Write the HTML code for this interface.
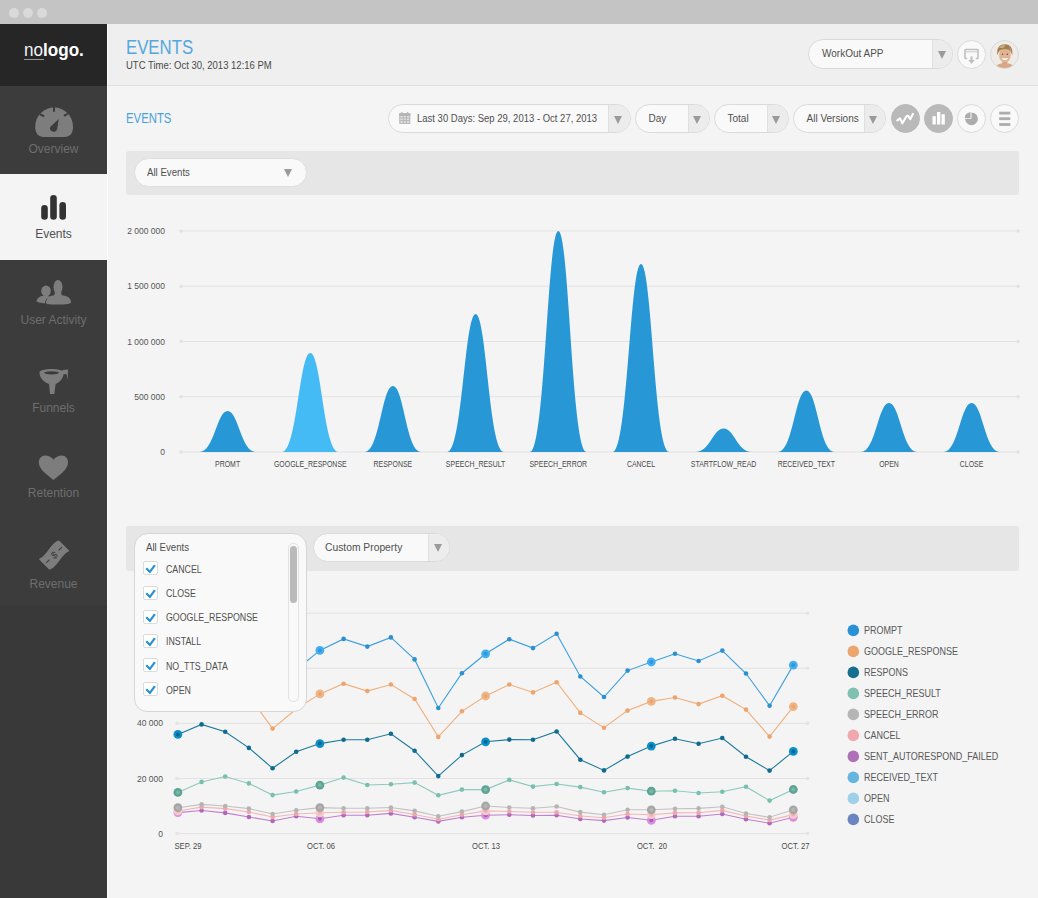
<!DOCTYPE html>
<html><head><meta charset="utf-8">
<style>
*{margin:0;padding:0;box-sizing:border-box}
html,body{width:1038px;height:898px;overflow:hidden;background:#f4f4f4;font-family:"Liberation Sans",sans-serif;color:#555}
.a{position:absolute}
#titlebar{left:0;top:0;width:1038px;height:24px;background:#c4c4c4}
.dot{width:10px;height:10px;border-radius:50%;background:#d9d9d9;top:8px}
#sidebar{left:0;top:24px;width:107px;height:874px;background:#393939}
.navbg{left:0;width:107px;background:#3c3c3c}
#logo{left:0;top:24px;width:107px;height:62px;background:#262626}
.lbl{position:absolute;left:0;width:107px;text-align:center;font-size:12px;color:#6e6e6e;white-space:nowrap}
#header{left:107px;top:24px;width:931px;height:62px;background:#efefef;border-bottom:1px solid #dfdfdf}
.pill{position:absolute;border:1px solid #dadada;border-radius:15px;background:#f9f9f9;font-size:10px;color:#505050;white-space:nowrap}
.pill .arr{position:absolute;right:0;top:0;bottom:0;border-left:1px solid #e0e0e0;background:#ececec;border-radius:0 14px 14px 0}
.pill .t{position:absolute;top:0;line-height:27px;transform-origin:0 50%}
.tri{position:absolute;width:0;height:0;border-left:4px solid transparent;border-right:4px solid transparent;border-top:8px solid #9a9a9a}
.circ{position:absolute;width:29px;height:29px;border-radius:50%;border:1px solid #dadada;background:#f9f9f9}
.filt{position:absolute;left:126px;width:892.5px;background:#e6e6e6;border-radius:3px}
svg text{font-family:"Liberation Sans",sans-serif}
.ax{font-size:8.5px;fill:#555}
.xl{font-size:8.5px;fill:#4a4a4a}
.xl2{font-size:8.5px;fill:#4a4a4a}
.lg{font-size:10px;fill:#585858}
.chk{position:absolute;left:143px;width:15px;height:14px;border:1px solid #dcdcdc;border-radius:2px;background:#fff}
.ck{position:absolute;left:165.5px;font-size:10px;color:#505050;white-space:nowrap;transform-origin:0 0;transform:scaleX(0.88)}
</style></head><body>
<div id="titlebar" class="a">
  <div class="a dot" style="left:9px"></div>
  <div class="a dot" style="left:23px"></div>
  <div class="a dot" style="left:37px"></div>
</div>
<div id="sidebar" class="a"></div>
<div class="a navbg" style="top:86px;height:88px"></div>
<div class="a" style="left:0;top:174px;width:107px;height:86px;background:#f4f4f4"></div>
<div class="a navbg" style="top:260px;height:346px"></div>
<div id="logo" class="a">
  <div class="a" style="left:24px;top:15px;font-size:19px;color:#fff;white-space:nowrap;transform-origin:0 0;transform:scaleX(0.9)"><span style="font-weight:normal;color:#f4f4f4">no</span><b>logo.</b></div>
  <div class="a" style="left:24px;top:35px;width:20px;height:1px;background:#9a9a9a"></div>
</div>
<!-- sidebar icons -->
<svg class="a" style="left:0;top:86px" width="107" height="519">
  <!-- overview gauge -->
  <path d="M43.5,51 C38.5,51 35.2,47.5 35.2,41 C35.2,29.5 44,21.5 54.1,21.5 C64.2,21.5 73,29.5 73,41 C73,47.5 69.7,51 64.7,51 Z" fill="#7d7d7d"/>
  <line x1="54" y1="21" x2="54" y2="25.8" stroke="#3b3b3b" stroke-width="2"/>
  <line x1="39.9" y1="28.1" x2="44.2" y2="30.4" stroke="#3b3b3b" stroke-width="2"/>
  <line x1="67.8" y1="27.6" x2="64" y2="29.8" stroke="#3b3b3b" stroke-width="2"/>
  <path d="M58.8,33 L57.1,43.2 A3.6,3.6 0 1 1 50.2,41 Z" fill="#3b3b3b"/>
  <!-- user activity -->
  <ellipse cx="46" cy="205" rx="4.8" ry="5.5" fill="#7d7d7d"/>
  <path d="M36.5,215.5 C37,211 41,209.8 46,209.8 C47.5,209.8 49,210.3 50,211 C46.5,212 45,214 45,217.5 C42,217 38,216.5 36.5,215.5 Z" fill="#7d7d7d"/>
  <ellipse cx="58" cy="201" rx="4.5" ry="7" fill="#7d7d7d"/>
  <path d="M55,206 L61,206 L62,210 L54,210 Z" fill="#7d7d7d"/>
  <path d="M46,217 C46,211.5 50,209 58,209 C66,209 71,211.5 71,216 C71,218 66,218.5 58,218.5 C50,218.5 46,218.5 46,217 Z" fill="#7d7d7d"/>
  <!-- funnel -->
  <ellipse cx="51.6" cy="286.3" rx="12.1" ry="3.3" fill="#7d7d7d"/>
  <path d="M39.5,286.5 C39.5,292 44,296.3 49,298 L50,308 L54.3,308 L55.6,298 C60,296.3 63.7,292 63.7,286.5 Z" fill="#7d7d7d"/>
  <path d="M62.5,284 L68,283.6 L67.6,294 L66.6,288.2 L63.2,288 Z" fill="#7d7d7d"/>
  <ellipse cx="51.6" cy="286.8" rx="7.4" ry="1.6" fill="#3b3b3b"/>
  <!-- heart -->
  <path d="M53.5,394 C48,389.5 38.8,383.5 38.8,376.5 C38.8,372.5 41.5,369.6 45,369.6 C48.5,369.6 52,371.5 53.5,373.7 C55,371.5 58.5,369.6 62,369.6 C65.5,369.6 68,372.5 68,376.5 C68,383.5 59,389.5 53.5,394 Z" fill="#7d7d7d"/>
  <!-- revenue -->
  <g transform="translate(54.1,469) rotate(45)">
    <path d="M-6.5,-13 L7,-13 C3.5,-6 10.5,6 6.5,13 L-7,13 C-3.5,6 -10.5,-6 -6.5,-13 Z" fill="#7d7d7d" stroke="#7d7d7d" stroke-width="1.6" stroke-linejoin="round"/>
    <line x1="0" y1="-11" x2="0" y2="-6.5" stroke="#3b3b3b" stroke-width="1"/>
    <line x1="0" y1="6.5" x2="0" y2="11" stroke="#3b3b3b" stroke-width="1"/>
    <text x="0" y="3.6" text-anchor="middle" font-size="10" fill="#3b3b3b" transform="rotate(-75)">$</text>
  </g>
  <!-- events bars -->
  <rect x="41.2" y="119" width="6.6" height="14.8" rx="3.3" fill="#333"/>
  <rect x="50.2" y="109" width="6.6" height="24.8" rx="3.3" fill="#333"/>
  <rect x="59.4" y="116" width="6.6" height="17.8" rx="3.3" fill="#333"/>
</svg>
<div class="lbl" style="top:141.5px">Overview</div>
<div class="lbl" style="top:226.5px;color:#505050">Events</div>
<div class="lbl" style="top:313px">User Activity</div>
<div class="lbl" style="top:400.5px">Funnels</div>
<div class="lbl" style="top:486px">Retention</div>
<div class="lbl" style="top:577px">Revenue</div>

<div id="header" class="a"></div>
<div class="a" style="left:107px;top:24px;width:1px;height:874px;background:#fbfbfb"></div>
<div class="a" style="left:125.5px;top:36px;font-size:19.5px;color:#52a8df;white-space:nowrap;transform-origin:0 0;transform:scaleX(0.86)">EVENTS</div>
<div class="a" style="left:126px;top:59.5px;font-size:10px;color:#4a4a4a;white-space:nowrap;transform-origin:0 0;transform:scaleX(0.95)">UTC Time: Oct 30, 2013 12:16 PM</div>

<div class="pill" style="left:808px;top:39px;width:145px;height:30px"><span class="t" style="left:13px">WorkOut APP</span><div class="arr" style="width:20px"><div class="tri" style="left:4.5px;top:10.5px"></div></div></div>
<div class="circ" style="left:957px;top:40px">
  <svg class="a" style="left:0;top:0" width="29" height="29"><g transform="translate(-958,-40.8)">
    <path d="M967.2,58.3 L965.6,58.3 Q965,58.3 965,57.7 L965,49.9 Q965,49.3 965.6,49.3 L977.4,49.3 Q978,49.3 978,49.9 L978,57.7 Q978,58.3 977.4,58.3 L975.8,58.3" fill="none" stroke="#c0c0c0" stroke-width="1.6"/>
    <line x1="965" y1="51.6" x2="978" y2="51.6" stroke="#c8c8c8" stroke-width="0.9"/>
    <path d="M970.4,56.3 L972.6,56.3 L972.6,59.8 L974.8,59.8 L971.5,63.8 L968.2,59.8 L970.4,59.8 Z" fill="#c0c0c0"/>
  </g></svg>
</div>
<div class="circ" style="left:990px;top:40px;background:#efebe7;overflow:hidden">
  <svg class="a" style="left:-1px;top:-1px" width="29" height="29">
    <path d="M5,29 C6,25 9,23.3 14.8,23.3 C20.6,23.3 23.6,25 24.6,29 Z" fill="#d9a785"/>
    <rect x="12.3" y="19" width="5" height="5" fill="#d6a280"/>
    <ellipse cx="14.9" cy="15" rx="5.9" ry="7.4" fill="#e0b393"/>
    <path d="M7.4,15.5 C6.3,8.2 9,4.2 14.8,4.2 C20.6,4.2 23.3,8.2 22.2,15.5 C21.2,11.3 19.6,9.3 14.8,9 C10,9.3 8.4,11.3 7.4,15.5 Z" fill="#a27f50"/>
    <path d="M9,8 C10.5,5.5 13,4.6 15.5,4.8 L13.5,8 Z" fill="#c9ab78"/>
    <path d="M19,6.5 C20.5,8 21.5,10 21.8,12.5 L20,10 Z" fill="#c2a270"/>
    <path d="M11.6,18.3 C12.8,20.8 17,20.8 18.2,18.3 Z" fill="#fafafa"/>
    <circle cx="12.5" cy="14.2" r="0.75" fill="#6a4a3a"/><circle cx="17.3" cy="14.2" r="0.75" fill="#6a4a3a"/>
  </svg>
</div>

<!-- toolbar -->
<div class="a" style="left:125.5px;top:110px;font-size:14px;color:#4aa2dc;white-space:nowrap;transform-origin:0 0;transform:scaleX(0.81)">EVENTS</div>
<div class="pill" style="left:388px;top:104px;width:243px;height:29px">
  <svg class="a" style="left:10px;top:7px" width="13" height="13">
    <rect x="0.8" y="1.8" width="10" height="9.6" fill="#dedede" stroke="#b4b4b4" stroke-width="1"/>
    <rect x="0.3" y="1.3" width="11" height="2.6" fill="#b4b4b4"/>
    <g stroke="#b4b4b4" stroke-width="0.9"><line x1="0.8" y1="6" x2="10.8" y2="6"/><line x1="0.8" y1="8.6" x2="10.8" y2="8.6"/><line x1="4.3" y1="3.5" x2="4.3" y2="11.4"/><line x1="7.4" y1="3.5" x2="7.4" y2="11.4"/></g>
    <rect x="2.3" y="0" width="1.2" height="2" fill="#b4b4b4"/><rect x="8" y="0" width="1.2" height="2" fill="#b4b4b4"/>
  </svg>
  <span class="t" style="left:28px;transform:scaleX(0.95)">Last 30 Days: Sep 29, 2013 - Oct 27, 2013</span><div class="arr" style="width:22px"><div class="tri" style="left:5px;top:10.7px"></div></div></div>
<div class="pill" style="left:635px;top:104px;width:75px;height:29px"><span class="t" style="left:12.5px">Day</span><div class="arr" style="width:21px"><div class="tri" style="left:4.3px;top:10.7px"></div></div></div>
<div class="pill" style="left:713.5px;top:104px;width:75px;height:29px"><span class="t" style="left:13px">Total</span><div class="arr" style="width:21px"><div class="tri" style="left:4.3px;top:10.7px"></div></div></div>
<div class="pill" style="left:793px;top:104px;width:93px;height:29px"><span class="t" style="left:12.5px">All Versions</span><div class="arr" style="width:21px"><div class="tri" style="left:4.3px;top:10.7px"></div></div></div>

<div class="circ" style="left:890.5px;top:104px;background:#b9b9b9;border-color:#b9b9b9">
  <svg class="a" style="left:-1px;top:-1px" width="29" height="29"><path d="M6.3,16.4 L9,14.4 L11.4,19.2 L15.2,12.8 Q16.5,11.3 17.6,12.2 L19.2,15.2 L21.9,9.9" fill="none" stroke="#fff" stroke-width="2.1" stroke-linejoin="round" stroke-linecap="round"/></svg>
</div>
<div class="circ" style="left:923.5px;top:104px;background:#b9b9b9;border-color:#b9b9b9">
  <svg class="a" style="left:-1px;top:-1px" width="29" height="29"><rect x="8.5" y="12.2" width="3.3" height="8.3" fill="#fff"/><rect x="13" y="8" width="3.3" height="12.5" fill="#fff"/><rect x="17.5" y="10.2" width="3.3" height="10.3" fill="#fff"/></svg>
</div>
<div class="circ" style="left:957px;top:104px">
  <svg class="a" style="left:-1px;top:-1px" width="29" height="29"><path d="M14.5,8.4 A6.4,6.4 0 1 1 8.1,14.8 L14.5,14.8 Z" fill="#acacac"/><path d="M13.5,8.2 L13.5,13.9 L7.8,13.9 A5.7,5.7 0 0 1 13.5,8.2 Z" fill="#acacac"/></svg>
</div>
<div class="circ" style="left:990px;top:104px">
  <svg class="a" style="left:-1px;top:-1px" width="29" height="29"><rect x="9.2" y="7.7" width="11.1" height="2.8" fill="#acacac"/><rect x="9.2" y="13.3" width="11.1" height="2.8" fill="#acacac"/><rect x="9.2" y="19.1" width="11.1" height="2.8" fill="#acacac"/></svg>
</div>

<!-- panel 1 -->
<div class="filt" style="top:151px;height:44px"></div>
<div class="pill" style="left:134px;top:158px;width:172.5px;height:29px;border-color:#dedede"><span class="t" style="left:11.5px;transform:scaleX(0.965)">All Events</span><div class="tri" style="left:149px;top:9.5px"></div></div>

<svg class="a" style="left:0;top:0" width="1038" height="898">
<line x1="181" y1="231" x2="1018" y2="231" stroke="#e2e2e2" stroke-width="1"/>
<circle cx="181" cy="231" r="1.8" fill="#e2e2e2"/><circle cx="1018" cy="231" r="1.8" fill="#e2e2e2"/>
<text x="165" y="234" text-anchor="end" class="ax">2 000 000</text>
<line x1="181" y1="286.25" x2="1018" y2="286.25" stroke="#e2e2e2" stroke-width="1"/>
<circle cx="181" cy="286.25" r="1.8" fill="#e2e2e2"/><circle cx="1018" cy="286.25" r="1.8" fill="#e2e2e2"/>
<text x="165" y="289.25" text-anchor="end" class="ax">1 500 000</text>
<line x1="181" y1="341.5" x2="1018" y2="341.5" stroke="#e2e2e2" stroke-width="1"/>
<circle cx="181" cy="341.5" r="1.8" fill="#e2e2e2"/><circle cx="1018" cy="341.5" r="1.8" fill="#e2e2e2"/>
<text x="165" y="344.5" text-anchor="end" class="ax">1 000 000</text>
<line x1="181" y1="396.75" x2="1018" y2="396.75" stroke="#e2e2e2" stroke-width="1"/>
<circle cx="181" cy="396.75" r="1.8" fill="#e2e2e2"/><circle cx="1018" cy="396.75" r="1.8" fill="#e2e2e2"/>
<text x="165" y="399.75" text-anchor="end" class="ax">500 000</text>
<line x1="181" y1="452" x2="1018" y2="452" stroke="#e2e2e2" stroke-width="1"/>
<circle cx="181" cy="452" r="1.8" fill="#e2e2e2"/><circle cx="1018" cy="452" r="1.8" fill="#e2e2e2"/>
<text x="165" y="455" text-anchor="end" class="ax">0</text>
<path d="M199.3,452 C214.3,452 216.6,411.0 227.6,411.0 C238.6,411.0 240.9,452 255.9,452 Z" fill="#2797d5"/>
<text transform="translate(227.6,467) scale(0.82,1)" text-anchor="middle" class="xl">PROMT</text>
<path d="M282.0,452 C297.0,452 299.3,353.0 310.3,353.0 C321.3,353.0 323.6,452 338.6,452 Z" fill="#45bbf5"/>
<text transform="translate(310.3,467) scale(0.82,1)" text-anchor="middle" class="xl">GOOGLE_RESPONSE</text>
<path d="M364.6,452 C379.6,452 381.9,386.0 392.9,386.0 C403.9,386.0 406.2,452 421.2,452 Z" fill="#2797d5"/>
<text transform="translate(392.9,467) scale(0.82,1)" text-anchor="middle" class="xl">RESPONSE</text>
<path d="M447.3,452 C462.3,452 464.6,314.0 475.6,314.0 C486.6,314.0 488.9,452 503.9,452 Z" fill="#2797d5"/>
<text transform="translate(475.6,467) scale(0.82,1)" text-anchor="middle" class="xl">SPEECH_RESULT</text>
<path d="M530.0,452 C545.0,452 547.3,231.0 558.3,231.0 C569.3,231.0 571.6,452 586.6,452 Z" fill="#2797d5"/>
<text transform="translate(558.3,467) scale(0.82,1)" text-anchor="middle" class="xl">SPEECH_ERROR</text>
<path d="M612.7,452 C627.7,452 630.0,264.0 641.0,264.0 C652.0,264.0 654.2,452 669.2,452 Z" fill="#2797d5"/>
<text transform="translate(641.0,467) scale(0.82,1)" text-anchor="middle" class="xl">CANCEL</text>
<path d="M695.3,452 C710.3,452 712.6,428.5 723.6,428.5 C734.6,428.5 736.9,452 751.9,452 Z" fill="#2797d5"/>
<text transform="translate(723.6,467) scale(0.82,1)" text-anchor="middle" class="xl">STARTFLOW_READ</text>
<path d="M778.0,452 C793.0,452 795.3,390.5 806.3,390.5 C817.3,390.5 819.6,452 834.6,452 Z" fill="#2797d5"/>
<text transform="translate(806.3,467) scale(0.82,1)" text-anchor="middle" class="xl">RECEIVED_TEXT</text>
<path d="M860.7,452 C875.7,452 878.0,403.0 889.0,403.0 C900.0,403.0 902.3,452 917.3,452 Z" fill="#2797d5"/>
<text transform="translate(889.0,467) scale(0.82,1)" text-anchor="middle" class="xl">OPEN</text>
<path d="M943.3,452 C958.3,452 960.6,403.0 971.6,403.0 C982.6,403.0 984.9,452 999.9,452 Z" fill="#2797d5"/>
<text transform="translate(971.6,467) scale(0.82,1)" text-anchor="middle" class="xl">CLOSE</text>
<line x1="177" y1="613.2" x2="807.5" y2="613.2" stroke="#e2e2e2" stroke-width="1"/>
<circle cx="177" cy="613.2" r="1.8" fill="#e4e4e4"/><circle cx="807.5" cy="613.2" r="1.8" fill="#e4e4e4"/>
<line x1="177" y1="668.3" x2="807.5" y2="668.3" stroke="#e2e2e2" stroke-width="1"/>
<circle cx="177" cy="668.3" r="1.8" fill="#e4e4e4"/><circle cx="807.5" cy="668.3" r="1.8" fill="#e4e4e4"/>
<line x1="177" y1="723.4" x2="807.5" y2="723.4" stroke="#e2e2e2" stroke-width="1"/>
<circle cx="177" cy="723.4" r="1.8" fill="#e4e4e4"/><circle cx="807.5" cy="723.4" r="1.8" fill="#e4e4e4"/>
<line x1="177" y1="778.5" x2="807.5" y2="778.5" stroke="#e2e2e2" stroke-width="1"/>
<circle cx="177" cy="778.5" r="1.8" fill="#e4e4e4"/><circle cx="807.5" cy="778.5" r="1.8" fill="#e4e4e4"/>
<line x1="177" y1="833.6" x2="807.5" y2="833.6" stroke="#e2e2e2" stroke-width="1"/>
<circle cx="177" cy="833.6" r="1.8" fill="#e4e4e4"/><circle cx="807.5" cy="833.6" r="1.8" fill="#e4e4e4"/>
<text x="163" y="726.4" text-anchor="end" class="ax">40 000</text>
<text x="163" y="781.5" text-anchor="end" class="ax">20 000</text>
<text x="163" y="836.6" text-anchor="end" class="ax">0</text>
<text transform="translate(188,849) scale(0.9,1)" text-anchor="middle" class="xl2">SEP. 29</text>
<text transform="translate(321,849) scale(0.9,1)" text-anchor="middle" class="xl2">OCT. 06</text>
<text transform="translate(486,849) scale(0.9,1)" text-anchor="middle" class="xl2">OCT. 13</text>
<text transform="translate(652,849) scale(0.9,1)" text-anchor="middle" class="xl2">OCT.&#160;&#160;20</text>
<text transform="translate(795.6,849) scale(0.9,1)" text-anchor="middle" class="xl2">OCT. 27</text>
<path d="M177.9,812.6 L201.6,810.5 L225.2,812.9 L248.9,817.0 L272.6,821.0 L296.2,816.2 L319.9,818.8 L343.6,815.2 L367.3,815.2 L390.9,813.4 L414.6,817.3 L438.3,821.4 L461.9,817.3 L485.6,815.2 L509.3,814.7 L533.0,815.5 L556.6,815.2 L580.3,819.0 L604.0,820.6 L627.6,817.5 L651.3,820.3 L675.0,816.2 L698.6,816.3 L722.3,814.0 L746.0,819.3 L769.6,823.2 L793.3,817.3" fill="none" stroke="#c07fca" stroke-width="1.1"/>
<path d="M177.9,811.0 L201.6,807.1 L225.2,808.6 L248.9,812.0 L272.6,817.0 L296.2,814.0 L319.9,812.8 L343.6,812.2 L367.3,812.0 L390.9,810.4 L414.6,814.5 L438.3,819.3 L461.9,814.7 L485.6,810.9 L509.3,811.5 L533.0,812.2 L556.6,812.2 L580.3,816.0 L604.0,817.8 L627.6,814.0 L651.3,814.7 L675.0,812.9 L698.6,812.7 L722.3,810.4 L746.0,816.0 L769.6,820.1 L793.3,814.6" fill="none" stroke="#f5b5ba" stroke-width="1.1"/>
<path d="M177.9,807.7 L201.6,804.4 L225.2,806.0 L248.9,808.6 L272.6,814.0 L296.2,810.2 L319.9,807.6 L343.6,808.3 L367.3,808.3 L390.9,807.5 L414.6,810.9 L438.3,816.2 L461.9,811.6 L485.6,806.0 L509.3,807.5 L533.0,808.3 L556.6,806.5 L580.3,812.1 L604.0,814.7 L627.6,809.8 L651.3,809.8 L675.0,808.8 L698.6,808.4 L722.3,806.8 L746.0,813.5 L769.6,817.3 L793.3,809.8" fill="none" stroke="#c2c2c2" stroke-width="1.1"/>
<path d="M177.9,792.4 L201.6,781.9 L225.2,776.5 L248.9,783.4 L272.6,795.1 L296.2,791.5 L319.9,785.1 L343.6,777.6 L367.3,785.0 L390.9,784.3 L414.6,782.6 L438.3,795.3 L461.9,789.6 L485.6,789.6 L509.3,779.9 L533.0,786.6 L556.6,784.0 L580.3,787.1 L604.0,792.2 L627.6,788.1 L651.3,791.2 L675.0,790.7 L698.6,793.0 L722.3,791.7 L746.0,786.7 L769.6,800.6 L793.3,789.5" fill="none" stroke="#8ecabd" stroke-width="1.1"/>
<path d="M177.9,734.4 L201.6,724.4 L225.2,731.7 L248.9,747.9 L272.6,768.3 L296.2,751.8 L319.9,743.6 L343.6,739.7 L367.3,739.7 L390.9,733.8 L414.6,750.7 L438.3,776.1 L461.9,755.1 L485.6,741.8 L509.3,739.6 L533.0,739.7 L556.6,731.5 L580.3,759.7 L604.0,770.4 L627.6,756.6 L651.3,746.1 L675.0,738.7 L698.6,743.8 L722.3,738.0 L746.0,756.7 L769.6,770.6 L793.3,751.4" fill="none" stroke="#1a7a9c" stroke-width="1.1"/>
<path d="M248.9,696.0 L272.6,728.6 L296.2,709.0 L319.9,693.9 L343.6,683.7 L367.3,691.1 L390.9,684.5 L414.6,699.0 L438.3,736.9 L461.9,711.3 L485.6,696.0 L509.3,684.5 L533.0,692.4 L556.6,682.2 L580.3,712.9 L604.0,727.7 L627.6,710.6 L651.3,701.4 L675.0,697.5 L698.6,704.1 L722.3,695.7 L746.0,709.6 L769.6,736.6 L793.3,706.6" fill="none" stroke="#f0b07c" stroke-width="1.1"/>
<path d="M296.2,669.7 L319.9,650.4 L343.6,638.9 L367.3,646.6 L390.9,637.4 L414.6,659.4 L438.3,708.0 L461.9,673.2 L485.6,653.8 L509.3,639.2 L533.0,648.1 L556.6,633.8 L580.3,676.5 L604.0,697.0 L627.6,670.6 L651.3,662.0 L675.0,653.8 L698.6,661.0 L722.3,650.6 L746.0,673.5 L769.6,705.7 L793.3,665.1" fill="none" stroke="#3a9fdd" stroke-width="1.1"/>
<circle cx="177.9" cy="812.6" r="4.4" fill="#d98ee1"/><circle cx="177.9" cy="812.6" r="2" fill="#a860b0"/>
<circle cx="201.6" cy="810.5" r="2.3" fill="#b068bd"/>
<circle cx="225.2" cy="812.9" r="2.3" fill="#b068bd"/>
<circle cx="248.9" cy="817.0" r="2.3" fill="#b068bd"/>
<circle cx="272.6" cy="821.0" r="2.3" fill="#b068bd"/>
<circle cx="296.2" cy="816.2" r="2.3" fill="#b068bd"/>
<circle cx="319.9" cy="818.8" r="4.4" fill="#d98ee1"/><circle cx="319.9" cy="818.8" r="2" fill="#a860b0"/>
<circle cx="343.6" cy="815.2" r="2.3" fill="#b068bd"/>
<circle cx="367.3" cy="815.2" r="2.3" fill="#b068bd"/>
<circle cx="390.9" cy="813.4" r="2.3" fill="#b068bd"/>
<circle cx="414.6" cy="817.3" r="2.3" fill="#b068bd"/>
<circle cx="438.3" cy="821.4" r="2.3" fill="#b068bd"/>
<circle cx="461.9" cy="817.3" r="2.3" fill="#b068bd"/>
<circle cx="485.6" cy="815.2" r="4.4" fill="#d98ee1"/><circle cx="485.6" cy="815.2" r="2" fill="#a860b0"/>
<circle cx="509.3" cy="814.7" r="2.3" fill="#b068bd"/>
<circle cx="533.0" cy="815.5" r="2.3" fill="#b068bd"/>
<circle cx="556.6" cy="815.2" r="2.3" fill="#b068bd"/>
<circle cx="580.3" cy="819.0" r="2.3" fill="#b068bd"/>
<circle cx="604.0" cy="820.6" r="2.3" fill="#b068bd"/>
<circle cx="627.6" cy="817.5" r="2.3" fill="#b068bd"/>
<circle cx="651.3" cy="820.3" r="4.4" fill="#d98ee1"/><circle cx="651.3" cy="820.3" r="2" fill="#a860b0"/>
<circle cx="675.0" cy="816.2" r="2.3" fill="#b068bd"/>
<circle cx="698.6" cy="816.3" r="2.3" fill="#b068bd"/>
<circle cx="722.3" cy="814.0" r="2.3" fill="#b068bd"/>
<circle cx="746.0" cy="819.3" r="2.3" fill="#b068bd"/>
<circle cx="769.6" cy="823.2" r="2.3" fill="#b068bd"/>
<circle cx="793.3" cy="817.3" r="4.4" fill="#d98ee1"/><circle cx="793.3" cy="817.3" r="2" fill="#a860b0"/>
<circle cx="177.9" cy="811.0" r="4.4" fill="#f7c9c9"/><circle cx="177.9" cy="811.0" r="2" fill="#f0b2b2"/>
<circle cx="201.6" cy="807.1" r="2.3" fill="#f0a5ab"/>
<circle cx="225.2" cy="808.6" r="2.3" fill="#f0a5ab"/>
<circle cx="248.9" cy="812.0" r="2.3" fill="#f0a5ab"/>
<circle cx="272.6" cy="817.0" r="2.3" fill="#f0a5ab"/>
<circle cx="296.2" cy="814.0" r="2.3" fill="#f0a5ab"/>
<circle cx="319.9" cy="812.8" r="4.4" fill="#f7c9c9"/><circle cx="319.9" cy="812.8" r="2" fill="#f0b2b2"/>
<circle cx="343.6" cy="812.2" r="2.3" fill="#f0a5ab"/>
<circle cx="367.3" cy="812.0" r="2.3" fill="#f0a5ab"/>
<circle cx="390.9" cy="810.4" r="2.3" fill="#f0a5ab"/>
<circle cx="414.6" cy="814.5" r="2.3" fill="#f0a5ab"/>
<circle cx="438.3" cy="819.3" r="2.3" fill="#f0a5ab"/>
<circle cx="461.9" cy="814.7" r="2.3" fill="#f0a5ab"/>
<circle cx="485.6" cy="810.9" r="4.4" fill="#f7c9c9"/><circle cx="485.6" cy="810.9" r="2" fill="#f0b2b2"/>
<circle cx="509.3" cy="811.5" r="2.3" fill="#f0a5ab"/>
<circle cx="533.0" cy="812.2" r="2.3" fill="#f0a5ab"/>
<circle cx="556.6" cy="812.2" r="2.3" fill="#f0a5ab"/>
<circle cx="580.3" cy="816.0" r="2.3" fill="#f0a5ab"/>
<circle cx="604.0" cy="817.8" r="2.3" fill="#f0a5ab"/>
<circle cx="627.6" cy="814.0" r="2.3" fill="#f0a5ab"/>
<circle cx="651.3" cy="814.7" r="4.4" fill="#f7c9c9"/><circle cx="651.3" cy="814.7" r="2" fill="#f0b2b2"/>
<circle cx="675.0" cy="812.9" r="2.3" fill="#f0a5ab"/>
<circle cx="698.6" cy="812.7" r="2.3" fill="#f0a5ab"/>
<circle cx="722.3" cy="810.4" r="2.3" fill="#f0a5ab"/>
<circle cx="746.0" cy="816.0" r="2.3" fill="#f0a5ab"/>
<circle cx="769.6" cy="820.1" r="2.3" fill="#f0a5ab"/>
<circle cx="793.3" cy="814.6" r="4.4" fill="#f7c9c9"/><circle cx="793.3" cy="814.6" r="2" fill="#f0b2b2"/>
<circle cx="177.9" cy="807.7" r="4.4" fill="#a6a6a6"/><circle cx="177.9" cy="807.7" r="2" fill="#b6b6b6"/>
<circle cx="201.6" cy="804.4" r="2.3" fill="#b4b4b4"/>
<circle cx="225.2" cy="806.0" r="2.3" fill="#b4b4b4"/>
<circle cx="248.9" cy="808.6" r="2.3" fill="#b4b4b4"/>
<circle cx="272.6" cy="814.0" r="2.3" fill="#b4b4b4"/>
<circle cx="296.2" cy="810.2" r="2.3" fill="#b4b4b4"/>
<circle cx="319.9" cy="807.6" r="4.4" fill="#a6a6a6"/><circle cx="319.9" cy="807.6" r="2" fill="#b6b6b6"/>
<circle cx="343.6" cy="808.3" r="2.3" fill="#b4b4b4"/>
<circle cx="367.3" cy="808.3" r="2.3" fill="#b4b4b4"/>
<circle cx="390.9" cy="807.5" r="2.3" fill="#b4b4b4"/>
<circle cx="414.6" cy="810.9" r="2.3" fill="#b4b4b4"/>
<circle cx="438.3" cy="816.2" r="2.3" fill="#b4b4b4"/>
<circle cx="461.9" cy="811.6" r="2.3" fill="#b4b4b4"/>
<circle cx="485.6" cy="806.0" r="4.4" fill="#a6a6a6"/><circle cx="485.6" cy="806.0" r="2" fill="#b6b6b6"/>
<circle cx="509.3" cy="807.5" r="2.3" fill="#b4b4b4"/>
<circle cx="533.0" cy="808.3" r="2.3" fill="#b4b4b4"/>
<circle cx="556.6" cy="806.5" r="2.3" fill="#b4b4b4"/>
<circle cx="580.3" cy="812.1" r="2.3" fill="#b4b4b4"/>
<circle cx="604.0" cy="814.7" r="2.3" fill="#b4b4b4"/>
<circle cx="627.6" cy="809.8" r="2.3" fill="#b4b4b4"/>
<circle cx="651.3" cy="809.8" r="4.4" fill="#a6a6a6"/><circle cx="651.3" cy="809.8" r="2" fill="#b6b6b6"/>
<circle cx="675.0" cy="808.8" r="2.3" fill="#b4b4b4"/>
<circle cx="698.6" cy="808.4" r="2.3" fill="#b4b4b4"/>
<circle cx="722.3" cy="806.8" r="2.3" fill="#b4b4b4"/>
<circle cx="746.0" cy="813.5" r="2.3" fill="#b4b4b4"/>
<circle cx="769.6" cy="817.3" r="2.3" fill="#b4b4b4"/>
<circle cx="793.3" cy="809.8" r="4.4" fill="#a6a6a6"/><circle cx="793.3" cy="809.8" r="2" fill="#b6b6b6"/>
<circle cx="177.9" cy="792.4" r="4.4" fill="#5ea393"/><circle cx="177.9" cy="792.4" r="2" fill="#7ab8a8"/>
<circle cx="201.6" cy="781.9" r="2.3" fill="#79bfae"/>
<circle cx="225.2" cy="776.5" r="2.3" fill="#79bfae"/>
<circle cx="248.9" cy="783.4" r="2.3" fill="#79bfae"/>
<circle cx="272.6" cy="795.1" r="2.3" fill="#79bfae"/>
<circle cx="296.2" cy="791.5" r="2.3" fill="#79bfae"/>
<circle cx="319.9" cy="785.1" r="4.4" fill="#5ea393"/><circle cx="319.9" cy="785.1" r="2" fill="#7ab8a8"/>
<circle cx="343.6" cy="777.6" r="2.3" fill="#79bfae"/>
<circle cx="367.3" cy="785.0" r="2.3" fill="#79bfae"/>
<circle cx="390.9" cy="784.3" r="2.3" fill="#79bfae"/>
<circle cx="414.6" cy="782.6" r="2.3" fill="#79bfae"/>
<circle cx="438.3" cy="795.3" r="2.3" fill="#79bfae"/>
<circle cx="461.9" cy="789.6" r="2.3" fill="#79bfae"/>
<circle cx="485.6" cy="789.6" r="4.4" fill="#5ea393"/><circle cx="485.6" cy="789.6" r="2" fill="#7ab8a8"/>
<circle cx="509.3" cy="779.9" r="2.3" fill="#79bfae"/>
<circle cx="533.0" cy="786.6" r="2.3" fill="#79bfae"/>
<circle cx="556.6" cy="784.0" r="2.3" fill="#79bfae"/>
<circle cx="580.3" cy="787.1" r="2.3" fill="#79bfae"/>
<circle cx="604.0" cy="792.2" r="2.3" fill="#79bfae"/>
<circle cx="627.6" cy="788.1" r="2.3" fill="#79bfae"/>
<circle cx="651.3" cy="791.2" r="4.4" fill="#5ea393"/><circle cx="651.3" cy="791.2" r="2" fill="#7ab8a8"/>
<circle cx="675.0" cy="790.7" r="2.3" fill="#79bfae"/>
<circle cx="698.6" cy="793.0" r="2.3" fill="#79bfae"/>
<circle cx="722.3" cy="791.7" r="2.3" fill="#79bfae"/>
<circle cx="746.0" cy="786.7" r="2.3" fill="#79bfae"/>
<circle cx="769.6" cy="800.6" r="2.3" fill="#79bfae"/>
<circle cx="793.3" cy="789.5" r="4.4" fill="#5ea393"/><circle cx="793.3" cy="789.5" r="2" fill="#7ab8a8"/>
<circle cx="177.9" cy="734.4" r="4.4" fill="#0b90cc"/><circle cx="177.9" cy="734.4" r="2" fill="#0a6890"/>
<circle cx="201.6" cy="724.4" r="2.3" fill="#106b8e"/>
<circle cx="225.2" cy="731.7" r="2.3" fill="#106b8e"/>
<circle cx="248.9" cy="747.9" r="2.3" fill="#106b8e"/>
<circle cx="272.6" cy="768.3" r="2.3" fill="#106b8e"/>
<circle cx="296.2" cy="751.8" r="2.3" fill="#106b8e"/>
<circle cx="319.9" cy="743.6" r="4.4" fill="#0b90cc"/><circle cx="319.9" cy="743.6" r="2" fill="#0a6890"/>
<circle cx="343.6" cy="739.7" r="2.3" fill="#106b8e"/>
<circle cx="367.3" cy="739.7" r="2.3" fill="#106b8e"/>
<circle cx="390.9" cy="733.8" r="2.3" fill="#106b8e"/>
<circle cx="414.6" cy="750.7" r="2.3" fill="#106b8e"/>
<circle cx="438.3" cy="776.1" r="2.3" fill="#106b8e"/>
<circle cx="461.9" cy="755.1" r="2.3" fill="#106b8e"/>
<circle cx="485.6" cy="741.8" r="4.4" fill="#0b90cc"/><circle cx="485.6" cy="741.8" r="2" fill="#0a6890"/>
<circle cx="509.3" cy="739.6" r="2.3" fill="#106b8e"/>
<circle cx="533.0" cy="739.7" r="2.3" fill="#106b8e"/>
<circle cx="556.6" cy="731.5" r="2.3" fill="#106b8e"/>
<circle cx="580.3" cy="759.7" r="2.3" fill="#106b8e"/>
<circle cx="604.0" cy="770.4" r="2.3" fill="#106b8e"/>
<circle cx="627.6" cy="756.6" r="2.3" fill="#106b8e"/>
<circle cx="651.3" cy="746.1" r="4.4" fill="#0b90cc"/><circle cx="651.3" cy="746.1" r="2" fill="#0a6890"/>
<circle cx="675.0" cy="738.7" r="2.3" fill="#106b8e"/>
<circle cx="698.6" cy="743.8" r="2.3" fill="#106b8e"/>
<circle cx="722.3" cy="738.0" r="2.3" fill="#106b8e"/>
<circle cx="746.0" cy="756.7" r="2.3" fill="#106b8e"/>
<circle cx="769.6" cy="770.6" r="2.3" fill="#106b8e"/>
<circle cx="793.3" cy="751.4" r="4.4" fill="#0b90cc"/><circle cx="793.3" cy="751.4" r="2" fill="#0a6890"/>
<circle cx="248.9" cy="696.0" r="2.3" fill="#eea46c"/>
<circle cx="272.6" cy="728.6" r="2.3" fill="#eea46c"/>
<circle cx="296.2" cy="709.0" r="2.3" fill="#eea46c"/>
<circle cx="319.9" cy="693.9" r="4.4" fill="#f0b584"/><circle cx="319.9" cy="693.9" r="2" fill="#e9a674"/>
<circle cx="343.6" cy="683.7" r="2.3" fill="#eea46c"/>
<circle cx="367.3" cy="691.1" r="2.3" fill="#eea46c"/>
<circle cx="390.9" cy="684.5" r="2.3" fill="#eea46c"/>
<circle cx="414.6" cy="699.0" r="2.3" fill="#eea46c"/>
<circle cx="438.3" cy="736.9" r="2.3" fill="#eea46c"/>
<circle cx="461.9" cy="711.3" r="2.3" fill="#eea46c"/>
<circle cx="485.6" cy="696.0" r="4.4" fill="#f0b584"/><circle cx="485.6" cy="696.0" r="2" fill="#e9a674"/>
<circle cx="509.3" cy="684.5" r="2.3" fill="#eea46c"/>
<circle cx="533.0" cy="692.4" r="2.3" fill="#eea46c"/>
<circle cx="556.6" cy="682.2" r="2.3" fill="#eea46c"/>
<circle cx="580.3" cy="712.9" r="2.3" fill="#eea46c"/>
<circle cx="604.0" cy="727.7" r="2.3" fill="#eea46c"/>
<circle cx="627.6" cy="710.6" r="2.3" fill="#eea46c"/>
<circle cx="651.3" cy="701.4" r="4.4" fill="#f0b584"/><circle cx="651.3" cy="701.4" r="2" fill="#e9a674"/>
<circle cx="675.0" cy="697.5" r="2.3" fill="#eea46c"/>
<circle cx="698.6" cy="704.1" r="2.3" fill="#eea46c"/>
<circle cx="722.3" cy="695.7" r="2.3" fill="#eea46c"/>
<circle cx="746.0" cy="709.6" r="2.3" fill="#eea46c"/>
<circle cx="769.6" cy="736.6" r="2.3" fill="#eea46c"/>
<circle cx="793.3" cy="706.6" r="4.4" fill="#f0b584"/><circle cx="793.3" cy="706.6" r="2" fill="#e9a674"/>
<circle cx="296.2" cy="669.7" r="2.3" fill="#2b8fd0"/>
<circle cx="319.9" cy="650.4" r="4.4" fill="#45aef0"/><circle cx="319.9" cy="650.4" r="2" fill="#2e98dc"/>
<circle cx="343.6" cy="638.9" r="2.3" fill="#2b8fd0"/>
<circle cx="367.3" cy="646.6" r="2.3" fill="#2b8fd0"/>
<circle cx="390.9" cy="637.4" r="2.3" fill="#2b8fd0"/>
<circle cx="414.6" cy="659.4" r="2.3" fill="#2b8fd0"/>
<circle cx="438.3" cy="708.0" r="2.3" fill="#2b8fd0"/>
<circle cx="461.9" cy="673.2" r="2.3" fill="#2b8fd0"/>
<circle cx="485.6" cy="653.8" r="4.4" fill="#45aef0"/><circle cx="485.6" cy="653.8" r="2" fill="#2e98dc"/>
<circle cx="509.3" cy="639.2" r="2.3" fill="#2b8fd0"/>
<circle cx="533.0" cy="648.1" r="2.3" fill="#2b8fd0"/>
<circle cx="556.6" cy="633.8" r="2.3" fill="#2b8fd0"/>
<circle cx="580.3" cy="676.5" r="2.3" fill="#2b8fd0"/>
<circle cx="604.0" cy="697.0" r="2.3" fill="#2b8fd0"/>
<circle cx="627.6" cy="670.6" r="2.3" fill="#2b8fd0"/>
<circle cx="651.3" cy="662.0" r="4.4" fill="#45aef0"/><circle cx="651.3" cy="662.0" r="2" fill="#2e98dc"/>
<circle cx="675.0" cy="653.8" r="2.3" fill="#2b8fd0"/>
<circle cx="698.6" cy="661.0" r="2.3" fill="#2b8fd0"/>
<circle cx="722.3" cy="650.6" r="2.3" fill="#2b8fd0"/>
<circle cx="746.0" cy="673.5" r="2.3" fill="#2b8fd0"/>
<circle cx="769.6" cy="705.7" r="2.3" fill="#2b8fd0"/>
<circle cx="793.3" cy="665.1" r="4.4" fill="#45aef0"/><circle cx="793.3" cy="665.1" r="2" fill="#2e98dc"/>
<circle cx="853.3" cy="630.4" r="5.8" fill="#2a90d8"/>
<text transform="translate(864,634.4) scale(0.9,1)" class="lg">PROMPT</text>
<circle cx="853.3" cy="651.4" r="5.8" fill="#eda56e"/>
<text transform="translate(864,655.4) scale(0.9,1)" class="lg">GOOGLE_RESPONSE</text>
<circle cx="853.3" cy="672.4" r="5.8" fill="#176f90"/>
<text transform="translate(864,676.4) scale(0.9,1)" class="lg">RESPONS</text>
<circle cx="853.3" cy="693.4" r="5.8" fill="#7fc0b0"/>
<text transform="translate(864,697.4) scale(0.9,1)" class="lg">SPEECH_RESULT</text>
<circle cx="853.3" cy="714.4" r="5.8" fill="#b5b5b5"/>
<text transform="translate(864,718.4) scale(0.9,1)" class="lg">SPEECH_ERROR</text>
<circle cx="853.3" cy="735.4" r="5.8" fill="#f0a7ad"/>
<text transform="translate(864,739.4) scale(0.9,1)" class="lg">CANCEL</text>
<circle cx="853.3" cy="756.4" r="5.8" fill="#b070b8"/>
<text transform="translate(864,760.4) scale(0.9,1)" class="lg">SENT_AUTORESPOND_FAILED</text>
<circle cx="853.3" cy="777.4" r="5.8" fill="#65b5e0"/>
<text transform="translate(864,781.4) scale(0.9,1)" class="lg">RECEIVED_TEXT</text>
<circle cx="853.3" cy="798.4" r="5.8" fill="#9fd0ea"/>
<text transform="translate(864,802.4) scale(0.9,1)" class="lg">OPEN</text>
<circle cx="853.3" cy="819.4" r="5.8" fill="#6a85c0"/>
<text transform="translate(864,823.4) scale(0.9,1)" class="lg">CLOSE</text>
</svg>

<!-- panel 2 -->
<div class="filt" style="top:526px;height:44.5px"></div>
<div class="pill" style="left:313px;top:533px;width:137px;height:29px"><span class="t" style="left:11px;line-height:27px;transform:scaleX(1.03)">Custom Property</span><div class="arr" style="width:21px"><div class="tri" style="left:4.7px;top:9.5px"></div></div></div>

<div class="a" style="left:134px;top:533px;width:173px;height:179px;background:#f9f9f9;border:1px solid #d6d6d6;border-radius:14px 14px 13px 13px"></div>
<div class="a" style="left:146px;top:541.5px;font-size:10px;color:#505050;white-space:nowrap;transform-origin:0 0;transform:scaleX(0.97)">All Events</div>
<div class="a" style="left:287.5px;top:542.5px;width:11px;height:159px;border:1px solid #e2e2e2;border-radius:5px;background:#f9f9f9"></div>
<div class="a" style="left:289.7px;top:545.5px;width:7px;height:57.5px;border-radius:3.5px;background:#bababa"></div>
<div class="chk" style="top:561.4px"><svg class="a" style="left:1px;top:1px" width="12" height="11"><path d="M1.2,5.2 L4.9,8.9 L9.9,2.2" fill="none" stroke="#2a91d3" stroke-width="2.2"/></svg></div>
<div class="ck" style="top:563.7px">CANCEL</div>
<div class="chk" style="top:585.6px"><svg class="a" style="left:1px;top:1px" width="12" height="11"><path d="M1.2,5.2 L4.9,8.9 L9.9,2.2" fill="none" stroke="#2a91d3" stroke-width="2.2"/></svg></div>
<div class="ck" style="top:587.9px">CLOSE</div>
<div class="chk" style="top:609.8px"><svg class="a" style="left:1px;top:1px" width="12" height="11"><path d="M1.2,5.2 L4.9,8.9 L9.9,2.2" fill="none" stroke="#2a91d3" stroke-width="2.2"/></svg></div>
<div class="ck" style="top:612.1px">GOOGLE_RESPONSE</div>
<div class="chk" style="top:634.0px"><svg class="a" style="left:1px;top:1px" width="12" height="11"><path d="M1.2,5.2 L4.9,8.9 L9.9,2.2" fill="none" stroke="#2a91d3" stroke-width="2.2"/></svg></div>
<div class="ck" style="top:636.3px">INSTALL</div>
<div class="chk" style="top:658.2px"><svg class="a" style="left:1px;top:1px" width="12" height="11"><path d="M1.2,5.2 L4.9,8.9 L9.9,2.2" fill="none" stroke="#2a91d3" stroke-width="2.2"/></svg></div>
<div class="ck" style="top:660.5px">NO_TTS_DATA</div>
<div class="chk" style="top:682.4px"><svg class="a" style="left:1px;top:1px" width="12" height="11"><path d="M1.2,5.2 L4.9,8.9 L9.9,2.2" fill="none" stroke="#2a91d3" stroke-width="2.2"/></svg></div>
<div class="ck" style="top:684.7px">OPEN</div>
</body></html>
